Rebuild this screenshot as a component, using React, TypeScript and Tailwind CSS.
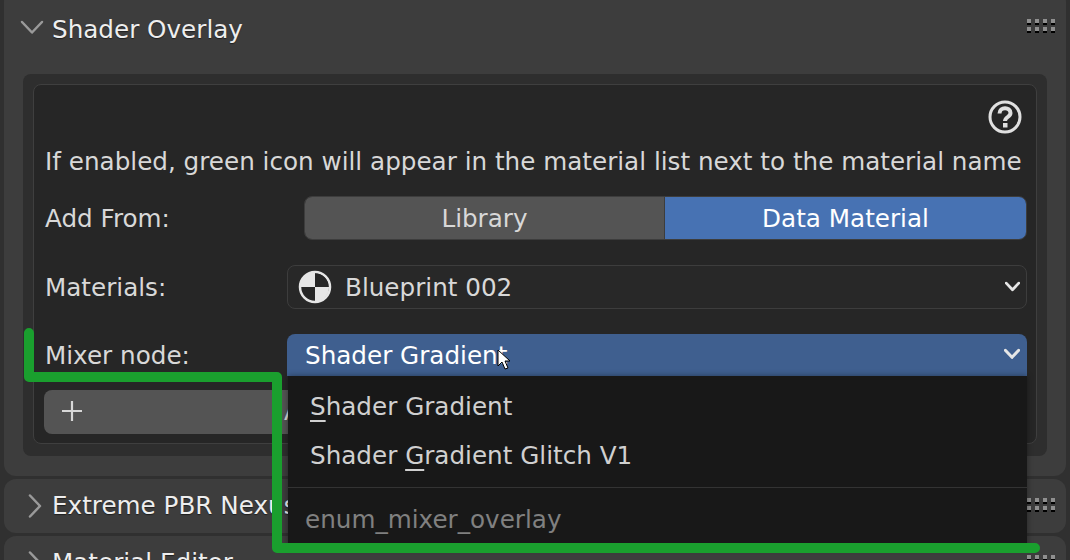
import React from 'react';

const font = { fontFamily: '"DejaVu Sans", sans-serif' };

const Chevron = ({ open, className, weight = 2.5 }: { open?: boolean; className?: string; weight?: number }) => (
  <svg viewBox="0 0 24 24" className={className} fill="none" stroke="currentColor" strokeWidth={weight} strokeLinecap="round" strokeLinejoin="round">
    {open ? <path d="M2 5 L12 15.5 L22 5" /> : <path d="M7 1.5 L17 12 L7 22.5" />}
  </svg>
);

const Grip = () => (
  <div className="grid grid-cols-4 gap-x-[4px] gap-y-[2px] w-[28px]">
    {Array.from({ length: 8 }).map((_, i) => (
      <div key={i} className="w-[4px] h-[6px] border-b-2 border-black bg-[#8f8f8f]" />
    ))}
  </div>
);

const MixedBall = () => (
  <svg viewBox="0 0 34 34" className="w-[34px] h-[34px] shrink-0">
    <circle cx="17" cy="17" r="15" fill="none" stroke="#e6e6e6" strokeWidth="2.5" />
    <path d="M17 2 A15 15 0 0 0 2 17 L17 17 Z" fill="#e6e6e6" />
    <path d="M17 17 L31 17 A15 15 0 0 1 17 32 Z" fill="#e6e6e6" />
    <path d="M17 3.5 A13.5 13.5 0 0 1 30.5 17 L17 17 Z" fill="#262626" />
    <path d="M17 17 L4 17 A13.5 13.5 0 0 0 17 29 Z" fill="#262626" />
  </svg>
);

const Row = ({ label, children, className }: { label: string; children: React.ReactNode; className?: string }) => (
  <div className={`flex items-center ${className ?? ''}`}>
    <span className="text-[24.65px] leading-none text-[#d8d8d8] pt-[3px]">{label}</span>
    {children}
  </div>
);

const Collapsed = ({ title, h }: { title: string; h: string }) => (
  <div className={`mx-[4px] mt-[3px] rounded-[12px] bg-[#3d3d3d] flex items-center pl-[19px] pr-[11px] ${h}`}>
    <Chevron className="w-[24px] h-[24px] text-[#9a9a9a] shrink-0" weight={2.5} />
    <span className="ml-[5px] text-[24.65px] leading-none text-[#eeeeee] [text-shadow:0_1px_1px_rgba(0,0,0,0.5)]">{title}</span>
    <div className="ml-auto -mt-[2px]"><Grip /></div>
  </div>
);

export default function App() {
  return (
    <div className="relative w-[1070px] h-[560px] overflow-hidden bg-[#303030]" style={font}>
      {/* open panel, cut by the top of the window */}
      <div className="mx-[4px] -mt-[10px] h-[486px] rounded-[12px] bg-[#3d3d3d] pt-[10px]">
        <div className="h-[74px] pb-[16px] flex items-center pl-[16px] pr-[11px]">
          <Chevron open className="w-[24px] h-[24px] text-[#9a9a9a] shrink-0" />
          <span className="ml-[8px] pt-[2px] text-[24.65px] leading-none text-[#eeeeee] [text-shadow:0_1px_1px_rgba(0,0,0,0.5)]">Shader Overlay</span>
          <div className="ml-auto -mt-[6px]"><Grip /></div>
        </div>

        <div className="mx-[19px] h-[382px] rounded-[8px] bg-[#2e2e2e] p-[10px]">
          <div className="h-[360px] rounded-[8px] border border-[#3f3f3f] bg-[#262626] pl-[11px] pr-[9px]">
            <div className="flex justify-end pt-[15px] pr-[5px] h-[56px]">
              <svg viewBox="0 0 34 34" className="w-[34px] h-[34px]">
                <circle cx="17" cy="17" r="15" fill="none" stroke="#e0e0e0" strokeWidth="3" />
                <path d="M11.5 13.5 C11.5 6.5 22.5 6.5 22.5 13 C22.5 17 17 17 17 21" fill="none" stroke="#e0e0e0" strokeWidth="4" />
                <rect x="15" y="23" width="4.5" height="4.5" fill="#e0e0e0" />
              </svg>
            </div>
            <div className="h-[41px] pt-[2px] flex items-center text-[24.65px] leading-none text-[#d8d8d8] whitespace-nowrap">
              If enabled, green icon will appear in the material list next to the material name
            </div>
            <Row label="Add From:" className="mt-[14px] h-[44px]">
              <div className="ml-auto w-[723px] h-[44px] flex rounded-[8px] overflow-hidden text-[24.65px] border border-[#3d3d3d]">
                <div className="w-[360px] pt-[2px] flex items-center justify-center bg-[#545454] text-[#d8d8d8] border-r border-[#3d3d3d]">Library</div>
                <div className="flex-1 pt-[2px] flex items-center justify-center bg-[#4772b3] text-white">Data Material</div>
              </div>
            </Row>
            <Row label="Materials:" className="mt-[25px] h-[44px]">
              <div className="ml-auto w-[740px] h-[44px] flex items-center rounded-[8px] border border-[#3d3d3d] bg-[#282828] pl-[10px] pr-[6px] text-[24.65px] text-[#d8d8d8]">
                <MixedBall />
                <span className="ml-[13px] pt-[2px]">Blueprint 002</span>
                <Chevron open className="ml-auto w-[15px] h-[15px] text-[#e6e6e6]" weight={4.5} />
              </div>
            </Row>
            <Row label="Mixer node:" className="mt-[25px] h-[42px]">
              <div className="ml-auto w-[740px] h-[42px] flex items-center rounded-t-[8px] bg-[#3f5f8f] pl-[18px] pr-[7px] text-[24.65px] text-white">
                <span className="pt-[2px]">Shader Gradient</span>
                <Chevron open className="ml-auto w-[16px] h-[16px] text-[#e6e6e6]" weight={4.5} />
              </div>
            </Row>
            <div className="mt-[14px] -ml-[1px] h-[44px] rounded-[8px] bg-[#545454] flex items-center pl-[16px] text-[24.65px] text-[#d8d8d8]">
              <svg viewBox="0 0 24 24" className="w-[24px] h-[24px] -mt-[2px]" fill="none" stroke="currentColor" strokeWidth="2.2">
                <path d="M12 2 V22 M2 12 H22" />
              </svg>
              <span className="ml-[200px]">A</span>
            </div>
          </div>
        </div>
      </div>

      <Collapsed title="Extreme PBR Nexus" h="h-[54px]" />
      <Collapsed title="Material Editor" h="h-[54px]" />

      {/* open dropdown menu */}
      <div className="absolute left-[288px] top-[376px] w-[739px] h-[172px] bg-[#181818] text-[24.65px] text-[#d0d0d0] shadow-[0_0_6px_rgba(0,0,0,0.4)]">
        <div className="pl-[22px] pt-[7px]">
          <div className="h-[49px] flex items-center whitespace-nowrap">
            <span className="underline decoration-2 underline-offset-[5px]">S</span>hader Gradient
          </div>
          <div className="h-[49px] flex items-center whitespace-nowrap">
            Shader&nbsp;<span className="underline decoration-2 underline-offset-[5px]">G</span>radient Glitch V1
          </div>
        </div>
        <div className="mt-[6px] border-t border-[#333333]" />
        <div className="pl-[17px] h-[64px] flex items-center text-[#808080]">enum_mixer_overlay</div>
      </div>

      {/* cursor */}
      <svg viewBox="0 0 14 22" className="absolute left-[497px] top-[349px] w-[14px] h-[22px]">
        <path d="M1 1 V17 L5 13 L8 20 L11 19 L8 12 H13 Z" fill="#ffffff" stroke="#000000" strokeWidth="1" />
      </svg>

      {/* green annotation line */}
      <svg viewBox="0 0 1070 560" className="absolute left-0 top-0 w-[1070px] h-[560px] pointer-events-none" fill="none">
        <path d="M29 333 V377 H277 V548 H1035" stroke="#1a9f2e" strokeWidth="10" strokeLinecap="round" strokeLinejoin="round" />
      </svg>
    </div>
  );
}
